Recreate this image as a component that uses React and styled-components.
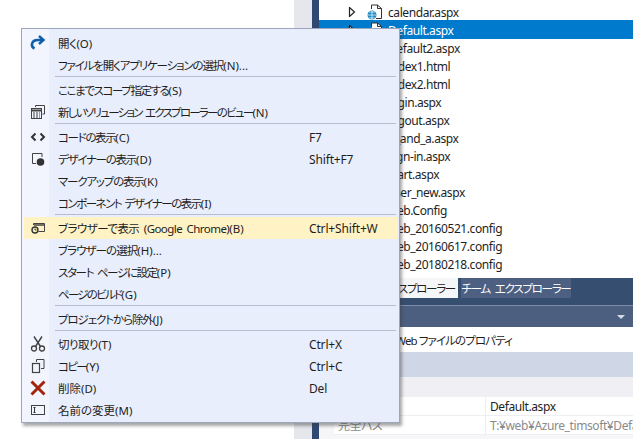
import React from 'react';
import styled, {createGlobalStyle} from 'styled-components';

const Global = createGlobalStyle`
	html, body {
		margin: 0;
		padding: 0;
		background: #fff;
	}
	body {
		font-family: "Noto Sans", "Noto Sans CJK JP", sans-serif;
		font-size: 12px;
		font-feature-settings: "palt";
	}
`

const Screen = styled.div`
	position: relative;
	width: 633px;
	height: 439px;
	overflow: hidden;
	display: flex;
	background: #fff;
`
const Editor = styled.div`
	width: 294px;
	flex: none;
`
const Strip = styled.div`
	width: 18px;
	flex: none;
	background: #e6e7ed;
`
const DockEdge = styled.div`
	width: 7px;
	flex: none;
	background: #2f4a72;
`
const Pane = styled.div`
	flex: 1;
	display: flex;
	flex-direction: column;
	min-width: 0;
`
const FileList = styled.div`
	height: 278px;
	flex: none;
	padding-top: 3px;
	box-sizing: border-box;
	overflow: hidden;
`
const FileRow = styled.div`
	height: 18px;
	display: flex;
	align-items: center;
	padding-left: 29px;
	background: ${p => p.$selected ? '#007acc' : 'transparent'};
	box-shadow: ${p => p.$selected ? '0 -1px 0 #007acc' : 'none'};
	color: ${p => p.$selected ? '#fff' : '#1e1e1e'};
`
const Arrow = styled.svg`
	width: 8px;
	height: 10px;
	flex: none;
	margin-right: 11px;
`
const FileIcon = styled.svg`
	width: 16px;
	height: 16px;
	flex: none;
	margin-right: 5px;
`
const FileName = styled.span`
	letter-spacing: -.42px;
`
const TabBar = styled.div`
	height: 28px;
	flex: none;
	display: flex;
	gap: 3px;
	background: #364e70;
	border-bottom: 1px solid #7f8fa9;
	box-sizing: border-box;
	align-items: flex-start;
`
const Tab = styled.div`
	height: 20px;
	display: flex;
	align-items: center;
	justify-content: ${p => p.$active ? 'flex-end' : 'center'};
	width: ${p => p.$active ? '139px' : '110px'};
	box-sizing: border-box;
	padding: 0 3px;
	white-space: nowrap;
	font-size: 11.5px;
	letter-spacing: -1.25px;
	word-spacing: 3px;
	background: ${p => p.$active ? '#f5f6f8' : '#4d6082'};
	color: ${p => p.$active ? '#1e1e1e' : '#fff'};
`
const TitleBar = styled.div`
	height: 21px;
	flex: none;
	display: flex;
	align-items: center;
	justify-content: flex-end;
	padding-right: 8px;
	background: #4d5f80;
`
const Caret = styled.div`
	width: 0;
	height: 0;
	border-left: 4px solid transparent;
	border-right: 4px solid transparent;
	border-top: 4px solid #d5dbe6;
`
const DescribeRow = styled.div`
	height: 25px;
	flex: none;
	display: flex;
	align-items: center;
	justify-content: flex-end;
	width: 193px;
	white-space: nowrap;
	font-size: 11.5px;
	letter-spacing: -.9px;
	color: #1e1e1e;
`
const Toolbar = styled.div`
	height: 25px;
	flex: none;
	background: #cfd6e6;
`
const Category = styled.div`
	height: 20px;
	flex: none;
	background: #f0f0f4;
`
const PropArea = styled.div`
	flex: 1;
	background: #f6f6f8;
`
const PropRow = styled.div`
	display: grid;
	grid-template-columns: 152px 1fr;
	height: 19px;
	margin-left: 15px;
	background: #fff;
	border-bottom: 1px solid #eeeef2;
	box-sizing: border-box;
	color: ${p => p.$muted ? '#8a8a8a' : '#1e1e1e'};
`
const PropName = styled.div`
	border-right: 1px solid #eeeef2;
	padding-left: 4px;
	display: flex;
	align-items: center;
	letter-spacing: -.5px;
`
const PropValue = styled.div`
	padding-left: 4px;
	display: flex;
	align-items: center;
	white-space: nowrap;
	overflow: hidden;
	letter-spacing: -.4px;
`

const Menu = styled.div`
	position: absolute;
	left: 21px;
	top: 28px;
	width: 379px;
	height: 395px;
	box-sizing: border-box;
	padding: 3px 2px;
	border: 1px solid #9ba7bf;
	background: linear-gradient(to right, #f3f5fe 27px, #e8eefc 27px);
	box-shadow: 2px 3px 3px rgba(60, 60, 60, .45);
`
const Item = styled.div`
	height: 22px;
	display: grid;
	grid-template-columns: 34px 251px 1fr;
	align-items: center;
	color: #1e1e1e;
	background: ${p => p.$hot ? '#fff2c4' : 'transparent'};
	white-space: nowrap;
`
const Label = styled.span`
	font-size: 11.5px;
	word-spacing: 2px;
	letter-spacing: ${p => p.$track}px;
`
const Mnemonic = styled.span`
	letter-spacing: 0;
`
const Shortcut = styled.span`
	letter-spacing: -.15px;
`
const Glyph = styled.span`
	display: flex;
	justify-content: center;
	padding-left: 2px;
	width: 24px;
`
const Sep = styled.div`
	height: 1px;
	margin: 0 1px 2px 31px;
	background: #b6bdd0;
`

const Ico = ({children}) => (
	<svg width="16" height="16" viewBox="0 0 16 16">{children}</svg>
);

const OpenIcon = () => (
	<Ico>
		<path d="M4.500 13.500C0.500 11.500 1 5 8 5H12" fill="none" stroke="#0c5fa8" strokeWidth="2.600"/>
		<path d="M9 1L13.500 5L9 9" fill="none" stroke="#0c5fa8" strokeWidth="2.400"/>
	</Ico>
);
const PanesIcon = () => (
	<Ico>
		<path d="M5.500 3V1.500H14.500V10H12.500" fill="none" stroke="#424242"/>
		<rect x="1.500" y="4.500" width="10" height="10" fill="#f3f5fe" stroke="#424242"/>
		<path d="M1.500 6.500H11.500" stroke="#424242" strokeWidth="2"/>
		<path d="M3 9H10M3 11H10M3 13H10" stroke="#424242" strokeDasharray="2 1"/>
	</Ico>
);
const CodeIcon = () => (
	<Ico>
		<path d="M5.500 4.500L2 8L5.500 11.500M10.500 4.500L14 8L10.500 11.500" fill="none" stroke="#333" strokeWidth="2"/>
	</Ico>
);
const DesignIcon = () => (
	<Ico>
		<path d="M6 12.500H2.500V2.500H12V6" fill="none" stroke="#424242"/>
		<circle cx="10.500" cy="11" r="3.800" fill="#333"/>
	</Ico>
);
const BrowserIcon = () => (
	<Ico>
		<path d="M3.500 5V3.500H14.500V11.500H8.500" fill="none" stroke="#424242"/>
		<path d="M4 5H14" stroke="#424242" strokeWidth="1.500"/>
		<circle cx="5" cy="10" r="3" fill="#fff2c4" stroke="#333" strokeWidth="1.400"/>
		<path d="M5 8.500V10H6.500" fill="none" stroke="#333"/>
	</Ico>
);
const CutIcon = () => (
	<Ico>
		<path d="M4 0.500L10.500 10.500M12 0.500L5.500 10.500" stroke="#424242" strokeWidth="1.400" fill="none"/>
		<circle cx="4" cy="12.500" r="2.500" fill="none" stroke="#424242" strokeWidth="1.300"/>
		<circle cx="12" cy="12.500" r="2.500" fill="none" stroke="#424242" strokeWidth="1.300"/>
	</Ico>
);
const CopyIcon = () => (
	<Ico>
		<path d="M6.500 4V1.500H14V10.500H11" fill="none" stroke="#424242"/>
		<rect x="2.500" y="5.500" width="7" height="9" fill="none" stroke="#424242" strokeWidth="1.200"/>
	</Ico>
);
const DeleteIcon = () => (
	<Ico>
		<path d="M1.500 1.500L14.500 14.500M14.500 1.500L1.500 14.500" stroke="#a1260d" strokeWidth="3"/>
	</Ico>
);
const RenameIcon = () => (
	<Ico>
		<rect x="1.500" y="3.500" width="13" height="9" fill="none" stroke="#424242"/>
		<path d="M3.500 5.500H5.500M3.500 10.500H5.500M4.500 5.500V10.500" fill="none" stroke="#333"/>
	</Ico>
);

const TriangleRight = () => (
	<Arrow viewBox="0 0 8 10">
		<path d="M1.500 0.500L6.500 5L1.500 9.500Z" fill="#fff" stroke="#222" strokeWidth="1.200"/>
	</Arrow>
);
const PageGlobe = () => (
	<FileIcon viewBox="0 0 16 16">
		<path d="M4.500 5V1H10.500L14.500 4.500V14.500H9" fill="#fff" stroke="#333"/>
		<path d="M10.500 1V4.500H14.500" fill="none" stroke="#333"/>
		<circle cx="5" cy="11" r="4.500" fill="#1e88c7"/>
		<path d="M0.500 11H9.500M5 6.500V15.500M2 8H8M2 14H8" stroke="#fff" strokeWidth=".7"/>
	</FileIcon>
);

const files = [
	'calendar.aspx', 'Default.aspx', 'Default2.aspx', 'index1.html', 'index2.html', 'login.aspx',
	'logout.aspx', 'q_and_a.aspx', 'sign-in.aspx', 'start.aspx', 'user_new.aspx', 'web.Config',
	'web_20160521.config', 'web_20160617.config', 'web_20180218.config',
];

const groups = [
	[
		{label: '開く', mn: '(O)', icon: <OpenIcon/>, track: -.5},
		{label: 'ファイルを開くアプリケーションの選択', mn: '(N)...', track: -1.15},
	],
	[
		{label: 'ここまでスコープ指定する', mn: '(S)', track: -1.4},
		{label: '新しいソリューション エクスプローラーのビュー', mn: '(N)', icon: <PanesIcon/>, track: -1.75},
	],
	[
		{label: 'コードの表示', mn: '(C)', icon: <CodeIcon/>, key: 'F7', track: -1.35},
		{label: 'デザイナーの表示', mn: '(D)', icon: <DesignIcon/>, key: 'Shift+F7', track: -1.25},
		{label: 'マークアップの表示', mn: '(K)', track: -1.2},
		{label: 'コンポーネント デザイナーの表示', mn: '(I)', track: -1.5},
	],
	[
		{label: 'ブラウザーで表示 (Google Chrome)', mn: '(B)', icon: <BrowserIcon/>, key: 'Ctrl+Shift+W', hot: true, track: -.55},
		{label: 'ブラウザーの選択', mn: '(H)...', track: -.95},
		{label: 'スタート ページに設定', mn: '(P)', track: -1.35},
		{label: 'ページのビルド', mn: '(G)', track: -1.75},
	],
	[
		{label: 'プロジェクトから除外', mn: '(J)', track: -1.1},
	],
	[
		{label: '切り取り', mn: '(T)', icon: <CutIcon/>, key: 'Ctrl+X', track: -.5},
		{label: 'コピー', mn: '(Y)', icon: <CopyIcon/>, key: 'Ctrl+C', track: -1.7},
		{label: '削除', mn: '(D)', icon: <DeleteIcon/>, key: 'Del', track: 0},
		{label: '名前の変更', mn: '(M)', icon: <RenameIcon/>, track: 0},
	],
];

const App = () => {
	return (
		<>
		<Global/>
		<Screen>
			<Editor/>
			<Strip/>
			<DockEdge/>
			<Pane>
				<FileList>
					{files.map((name) => (
						<FileRow key={name} $selected={name === 'Default.aspx'}>
							<TriangleRight/>
							<PageGlobe/>
							<FileName>{name}</FileName>
						</FileRow>
					))}
				</FileList>
				<TabBar>
					<Tab $active>ソリューション エクスプローラー</Tab>
					<Tab>チーム エクスプローラー</Tab>
				</TabBar>
				<TitleBar><Caret/></TitleBar>
				<DescribeRow>Default.aspx Web ファイルのプロパティ</DescribeRow>
				<Toolbar/>
				<Category/>
				<PropArea>
					<PropRow>
						<PropName>ファイル名</PropName>
						<PropValue>Default.aspx</PropValue>
					</PropRow>
					<PropRow $muted>
						<PropName>完全パス</PropName>
						<PropValue>T:¥web¥Azure_timsoft¥Default.aspx</PropValue>
					</PropRow>
				</PropArea>
			</Pane>
			<Menu>
				{groups.map((items, g) => (
					<React.Fragment key={g}>
						{g > 0 && <Sep/>}
						{items.map(item => (
							<Item key={item.label} $hot={item.hot}>
								<Glyph>{item.icon}</Glyph>
								<Label $track={item.track}>{item.label}<Mnemonic>{item.mn}</Mnemonic></Label>
								<Shortcut>{item.key}</Shortcut>
							</Item>
						))}
					</React.Fragment>
				))}
			</Menu>
		</Screen>
		</>
	);
};

export default App;
